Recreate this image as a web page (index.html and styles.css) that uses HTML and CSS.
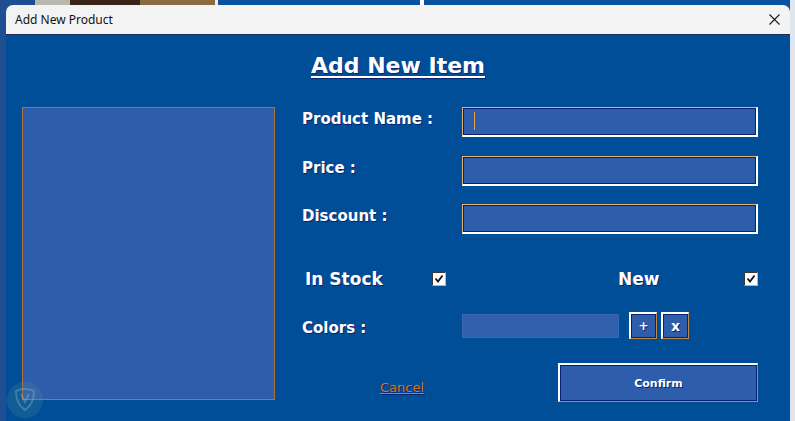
FILE: index.html
```html
<!DOCTYPE html>
<html lang="en">
<head>
  <meta charset="UTF-8">
  <meta name="viewport" content="width=device-width, initial-scale=1.0">
  <title>Add New Product</title>
  <link rel="stylesheet" href="styles.css">
</head>
<body>
  <div class="window">
    <div class="title-bar">
      <span class="title-text">Add New Product</span>
      <button class="close-button" aria-label="Close">
        <svg width="11" height="11" viewBox="0 0 11 11">
          <path d="M0.5 0.5 L10.5 10.5 M10.5 0.5 L0.5 10.5" stroke="#1a1a1a" stroke-width="1.1" fill="none"/>
        </svg>
      </button>
    </div>

    <div class="content">
      <h1 class="heading">Add New Item</h1>

      <div class="main">
        <div class="photo"></div>

        <form class="form">
          <div class="row">
            <label class="label">Product Name :</label>
            <input class="field field-focus" type="text">
          </div>
          <div class="row row-price">
            <label class="label">Price :</label>
            <input class="field" type="text">
          </div>
          <div class="row row-discount">
            <label class="label">Discount :</label>
            <input class="field" type="text">
          </div>

          <div class="flags">
            <span class="flag-label flag-stock">In Stock</span>
            <span class="check">
              <svg width="10" height="10" viewBox="0 0 10 10">
                <path d="M1.5 4.5 L4 7.5 L8.5 1.5" stroke="#111" stroke-width="1.8" fill="none"/>
              </svg>
            </span>
            <span class="flag-label flag-new">New</span>
            <span class="check">
              <svg width="10" height="10" viewBox="0 0 10 10">
                <path d="M1.5 4.5 L4 7.5 L8.5 1.5" stroke="#111" stroke-width="1.8" fill="none"/>
              </svg>
            </span>
          </div>

          <div class="row row-colors">
            <label class="label label-colors">Colors :</label>
            <div class="colors">
              <div class="color-box"></div>
              <button type="button" class="small-button">+</button>
              <button type="button" class="small-button small-x">x</button>
            </div>
          </div>

          <div class="row row-actions">
            <a href="#" class="cancel">Cancel</a>
            <button type="button" class="confirm">Confirm</button>
          </div>
        </form>
      </div>

      <div class="watermark">
        <svg width="22" height="24" viewBox="0 0 22 24">
          <path d="M2 3 Q11 -1 20 3 Q20 16 11 22 Q2 16 2 3 Z M7 6 L11 14 L15 6" stroke="rgba(150,190,200,0.35)" stroke-width="2" fill="none"/>
        </svg>
      </div>
    </div>
  </div>
</body>
</html>
```

FILE: styles.css
```css
/* Dialog styling */
body {
  margin: 0;
  padding: 5px 5px 0 6px;
  height: 421px;
  box-sizing: border-box;
  overflow: hidden;
  background: linear-gradient(to right,
    #1f4f92 0, #1f4f92 35px,
    #b9b7ae 35px, #b9b7ae 70px,
    #3a2418 70px, #3a2418 140px,
    #8a6a40 140px, #8a6a40 215px,
    #eeeeee 215px, #eeeeee 218px,
    #0a52a0 218px, #0a52a0 420px,
    #ffffff 420px, #ffffff 424px,
    #0a52a0 424px, #0a52a0 790px,
    #dfe6f0 790px);
}

.window {
  width: 784px;
  height: 416px;
  display: flex;
  flex-direction: column;
}

.title-bar {
  height: 29px;
  background: #f3f3f3;
  border-radius: 7px 7px 0 0;
  border-bottom: 1px solid #1c2b55;
  display: flex;
  align-items: center;
  justify-content: space-between;
  padding: 0 10px 0 9px;
  font-family: "Noto Sans", "Open Sans", sans-serif;
  font-size: 12px;
  color: #111;
}

.close-button {
  border: none;
  background: none;
  padding: 0;
  display: flex;
}

.content {
  flex: 1;
  background: #004e98;
  position: relative;
  font-family: "DejaVu Sans", sans-serif;
  font-weight: bold;
  color: #fff;
}

.heading {
  margin: 0;
  padding-top: 18px;
  font-size: 22px;
  line-height: 26px;
  text-align: center;
  text-decoration: underline;
  text-decoration-thickness: 2px;
  text-underline-offset: 3px;
  text-shadow: 1px 1px 0 #0b2470;
}

.main {
  display: flex;
  gap: 27px;
  margin-top: 28px;
  padding-left: 16px;
}

.photo {
  width: 253px;
  height: 293px;
  box-sizing: border-box;
  background: #2e5dab;
  border: 1px solid #b07038;
}

.form {
  width: 456px;
}

.row {
  display: grid;
  grid-template-columns: 160px 296px;
}

.row-price {
  margin-top: 19px;
}

.row-discount {
  margin-top: 18px;
}

.label {
  font-size: 15px;
  line-height: 18px;
  padding-top: 3px;
  text-shadow: 1px 1px 0 #0b2470;
}

.field {
  height: 30px;
  box-sizing: border-box;
  margin: 0;
  padding: 0;
  background: #2e5dab;
  border-style: solid;
  border-width: 1px 2px 2px 1px;
  border-color: #e3b47c #ffffff #ffffff #e3b47c;
  box-shadow: inset 1px 1px 0 #0a1f6e, inset -1px -1px 0 #0a1f6e;
  outline: none;
}

.field-focus {
  background: linear-gradient(#e2a54e, #e2a54e) no-repeat 11px 4px / 1px 18px, #2e5dab;
}

.flags {
  display: flex;
  align-items: center;
  height: 30px;
  margin-top: 30px;
  padding-left: 3px;
}

.flag-label {
  font-size: 17px;
  text-shadow: 1px 1px 0 #0b2470;
}

.flag-stock {
  width: 127px;
}

.flag-new {
  width: 126px;
  margin-left: 172px;
}

.check {
  width: 14px;
  height: 14px;
  box-sizing: border-box;
  background: #fff;
  border: 1px solid;
  border-color: #3a3a3a #d9b27e #d9b27e #3a3a3a;
  display: flex;
  align-items: center;
  justify-content: center;
}

.row-colors {
  margin-top: 18px;
  align-items: center;
}

.label-colors {
  padding-top: 4px;
}

.colors {
  display: flex;
  align-items: center;
}

.color-box {
  width: 157px;
  height: 24px;
  box-sizing: border-box;
  background: #3060ab;
  border: 1px solid #3a67b2;
  margin-right: 10px;
}

.small-button {
  width: 28px;
  height: 27px;
  box-sizing: border-box;
  padding: 0;
  background: #2e5dab;
  border-style: solid;
  border-width: 2px 1px 1px 2px;
  border-color: #ffffff #c08850 #c08850 #ffffff;
  box-shadow: inset 1px 1px 0 #0a1f6e, inset -1px -1px 0 #0a1f6e;
  color: #fff;
  font-family: "DejaVu Sans", sans-serif;
  font-weight: bold;
  font-size: 12px;
  text-shadow: 1px 1px 0 #0b2470;
}

.small-x {
  margin-left: 4px;
  font-size: 14px;
}

.row-actions {
  margin-top: 24px;
  align-items: center;
}

.cancel {
  margin-left: 78px;
  margin-top: 9px;
  font-size: 13px;
  font-weight: normal;
  color: #db7418;
  text-shadow: 1px 1px 0 #0b2470;
}

.confirm {
  justify-self: end;
  width: 200px;
  height: 39px;
  box-sizing: border-box;
  background: #2e5dab;
  border-style: solid;
  border-width: 2px 1px 1px 2px;
  border-color: #ffffff #c08850 #c08850 #ffffff;
  box-shadow: inset 1px 1px 0 #0a1f6e, inset -1px -1px 0 #0a1f6e;
  color: #fff;
  font-family: "DejaVu Sans", sans-serif;
  font-weight: bold;
  font-size: 11px;
  text-shadow: 1px 1px 0 #0b2470;
}

/* faint watermark badge in the corner */
.watermark {
  position: absolute;
  left: 1px;
  top: 347px;
  width: 36px;
  height: 36px;
  border-radius: 50%;
  display: flex;
  align-items: center;
  justify-content: center;
  background: radial-gradient(circle, rgba(80, 140, 150, 0.22) 55%, rgba(110, 170, 110, 0.18) 78%, rgba(110, 170, 110, 0) 100%);
}
```
